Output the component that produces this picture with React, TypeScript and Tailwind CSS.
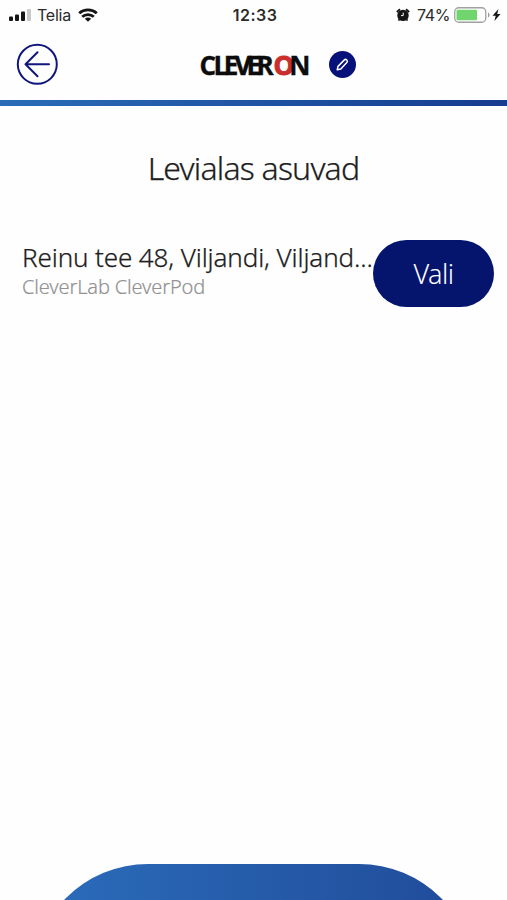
import type { ReactNode } from 'react';

interface Place {
  address: string;
  name: string;
}

const places: Place[] = [
  { address: 'Reinu tee 48, Viljandi, Viljand...', name: 'CleverLab CleverPod' },
];

function StatusBar() {
  return (
    <div className="grid h-[30px] grid-cols-[1fr_auto_1fr] items-center pl-[9px] pr-[6px] font-['Inter','Liberation_Sans',sans-serif] text-[#2b2b2b]">
      <div className="flex items-center">
        <svg width="23" height="14" viewBox="0 0 23 14">
          <rect x="0" y="8.5" width="4" height="4.5" rx="1" fill="#151515" />
          <rect x="6" y="6.5" width="4" height="6.5" rx="1" fill="#151515" />
          <rect x="12" y="3.5" width="4" height="9.5" rx="1" fill="#151515" />
          <rect x="18" y="1" width="4" height="12" rx="1" fill="#c9c9c9" />
        </svg>
        <span className="ml-[5px] text-[16px] leading-none tracking-[-0.25px]">Telia</span>
        <svg className="ml-[7px]" width="20" height="14" viewBox="0 0 20 14" fill="none" stroke="#151515" strokeWidth="2.8">
          <path d="M1.2 5.2C6 .7 14 .7 18.8 5.2" />
          <path d="M4.2 8.8c3.4-3 8.2-3 11.6 0" />
          <path d="M10 13.8 6.8 10.8c2-1.6 4.4-1.6 6.4 0Z" fill="#151515" stroke="none" />
        </svg>
      </div>
      <span className="text-[16px] font-semibold leading-none tracking-[0.5px]">12:33</span>
      <div className="flex items-center justify-end">
        <svg width="14" height="14" viewBox="0 0 14 14">
          <circle cx="7" cy="7.4" r="5.7" fill="#151515" />
          <path d="M.8 4 4 1.2M13.2 4 10 1.2M3.2 11.5 2.6 12.6M10.8 11.5l.6 1.1" stroke="#151515" strokeWidth="1.8" />
          <path d="M7.2 4.6v3H5" fill="none" stroke="#fff" strokeWidth="1" />
        </svg>
        <span className="ml-[7.5px] text-[16px] leading-none tracking-[-0.4px]">74%</span>
        <svg className="ml-[4px]" width="37" height="16" viewBox="0 0 37 16">
          <rect x=".75" y=".75" width="31" height="14.5" rx="4" fill="#fff" stroke="#a0a0a0" strokeWidth="1.3" />
          <rect x="2.5" y="2.8" width="20.5" height="10.4" rx="1" fill="#70d56c" />
          <path d="M34 5.5c2 .8 2 4.2 0 5Z" fill="#999" />
        </svg>
        <svg className="ml-[1px]" width="9" height="12" viewBox="0 0 9 12">
          <path d="M6.5 0 .5 6.8h3.2L2.4 12l6.1-7H5.2Z" fill="#151515" />
        </svg>
      </div>
    </div>
  );
}

function Logo() {
  return (
    <svg
      width="116"
      height="30"
      viewBox="-2 -2 116 30"
      className="overflow-visible font-['Open_Sans','Noto_Sans',sans-serif]"
      fontSize="26"
      fontWeight="700"
    >
      <text x="-0.5 13.5 23.8 34.4 46.4 56.6 73.6 89.2" y="22.5" fill="#0c0c0c" stroke="#0c0c0c" strokeWidth=".4">
        CLEVER<tspan fill="#c92f2c" stroke="#c92f2c" strokeWidth="1">O</tspan>N
      </text>
    </svg>
  );
}

function Header() {
  return (
    <header>
      <div className="flex h-[70px] items-center pl-[16px]">
        <button aria-label="Tagasi" className="mb-[2px]">
          <svg width="42" height="42" viewBox="0 0 42 42" fill="none" stroke="#10167d" strokeWidth="2" strokeLinecap="round" strokeLinejoin="round">
            <circle cx="21.3" cy="21.3" r="19.5" />
            <path d="M33 21.3H9.5M21.5 9.3l-12 12 12 12" />
          </svg>
        </button>
        <div className="ml-[140px]">
          <Logo />
        </div>
        <button aria-label="Muuda" className="mb-[2px] ml-[15px] flex size-[27px] items-center justify-center rounded-full bg-[#07117a]">
          <svg width="15" height="15" viewBox="0 0 15 15" fill="none" stroke="#fff" strokeWidth="1.5" strokeLinejoin="round">
            <path d="m2.2 12.8.8-3.4 6.4-6.5c1.5-1.4 3.9.8 2.6 2.4L5.8 11.9Z" />
          </svg>
        </button>
      </div>
      <div className="h-[6px] bg-linear-to-r from-[#2a6cb8] to-[#173b8f]" />
    </header>
  );
}

function PillButton({ children }: { children: ReactNode }) {
  return (
    <button className="flex h-[67px] w-[121px] shrink-0 items-center justify-center rounded-full bg-[#05156e] pt-[2px] text-[27px] font-light tracking-[-0.5px] text-white">
      {children}
    </button>
  );
}

export default function App() {
  return (
    <div className="flex h-[900px] w-[507px] flex-col overflow-hidden bg-[#fefefe] font-['Noto_Sans','Open_Sans',sans-serif] text-[#202020]">
      <StatusBar />
      <Header />

      <main className="flex-1">
        <h1 className="mt-[41px] text-center text-[32px] font-light leading-[42px] tracking-[-0.8px] [-webkit-text-stroke:0.25px]">Levialas asuvad</h1>
        <ul className="mt-[50.5px]">
          {places.map((place) => (
            <li key={place.address} className="flex items-start pl-[22px] pr-[12px]">
              <div className="w-[351px] shrink-0 whitespace-nowrap pt-[1px] font-light">
                <p className="text-[26px] leading-[32px] tracking-[-0.12px] [-webkit-text-stroke:0.25px]">{place.address}</p>
                <p className="text-[20px] leading-[28px] tracking-[-0.15px] text-[#929292] [-webkit-text-stroke:0.2px]">{place.name}</p>
              </div>
              <PillButton>Vali</PillButton>
            </li>
          ))}
        </ul>
      </main>

      {/* Bottom action, cut off by the screen edge */}
      <div className="h-[36px] shrink-0 px-[32px]">
        <div className="h-[232px] rounded-[116px] bg-linear-to-r from-[#2b6dbb] to-[#204b99]" />
      </div>
    </div>
  );
}
